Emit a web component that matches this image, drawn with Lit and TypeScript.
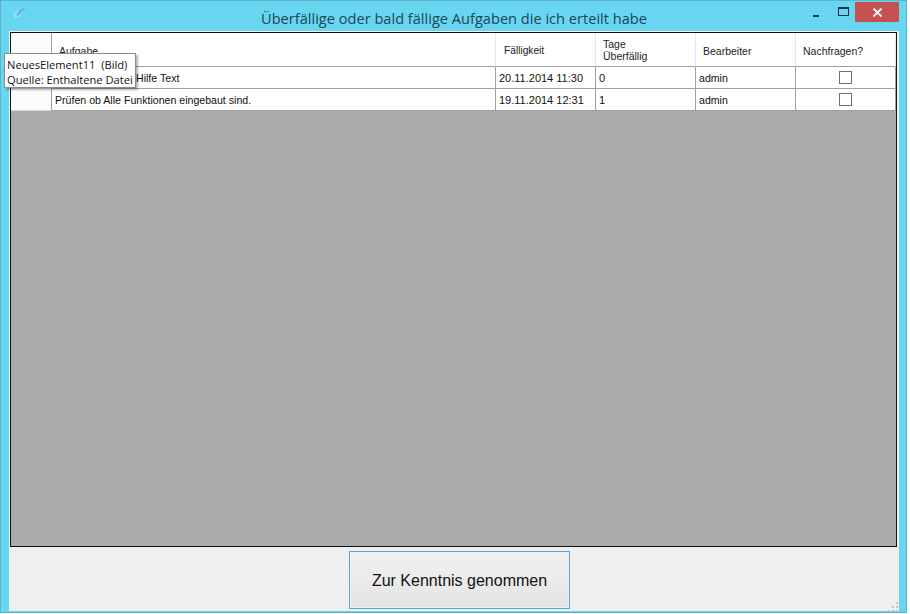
import { LitElement, html, css } from "lit";
import { customElement } from "lit/decorators.js";

const rows = [
  { task: "Hilfe Text", covered: true, due: "20.11.2014 11:30", days: "0", who: "admin" },
  { task: "Prüfen ob Alle Funktionen eingebaut sind.", covered: false, due: "19.11.2014 12:31", days: "1", who: "admin" },
];

@customElement("app-root")
export class AppRoot extends LitElement {
  static styles = css`
    :host { display: block; width: 910px; height: 614px; background: #fff; position: relative; overflow: hidden; font-family: "Liberation Sans", Arial, sans-serif; }
    .win { width: 907px; height: 613px; box-sizing: border-box; background: #69d6f1; border: 1px solid #5bb4cf; display: flex; flex-direction: column; padding: 0 7px 1px 8px; }
    .title { height: 30px; flex: none; display: flex; align-items: flex-start; position: relative; }
    .app-icon { margin: 6px 0 0 2px; }
    .title-text { position: absolute; left: 0; right: 0; top: 7px; text-align: center; font: 14.6px "Open Sans", sans-serif; color: #1c4754; }
    .controls { margin-left: auto; display: flex; align-items: flex-start; margin-top: 1px; }
    .ctl { width: 26px; height: 20px; display: flex; align-items: center; justify-content: center; }
    .min i { display: block; width: 6px; height: 2px; background: #12333f; margin-top: 7px; margin-right: 1px; }
    .max i { display: block; width: 9px; height: 6px; border: 1px solid #12333f; border-top-width: 2px; margin-top: -1px; margin-left: 2px; }
    .close { width: 44px; height: 20px; background: #c75050; display: flex; align-items: center; justify-content: center; }
    .body { flex: 1; background: #f0f0f0; display: flex; flex-direction: column; min-height: 0; padding: 1px 2px 0 1px; }
    .grid { height: 515px; flex: none; box-sizing: border-box; border: 1px solid #101010; background: #ababab; }
    .row { display: grid; grid-template-columns: 41px 444px repeat(4, 100px); background: #fff; }
    .hdr { height: 34px; }
    .data { height: 22px; }
    .cell { box-sizing: border-box; font-size: 10.6px; color: #111; border-right: 1px solid #a0a0a0; border-bottom: 1px solid #a0a0a0; padding: 5px 0 0 3px; white-space: nowrap; overflow: hidden; }
    .date { font-size: 11px; }
    .covered { padding-left: 84px; }
    .rh { background: #fbfbfc; border-right: 1px solid #a0a0a0; border-bottom: 1px solid #d8d8d8; }
    .h { border-right: 1px solid #e3e8f0; border-bottom: 1px solid #a0a0a0; background: #fff; color: #222; padding: 12px 0 0 7px; line-height: 12px; font-size: 10.5px; }
    .h.due { padding-left: 8px; font-size: 10.2px; }
    .h.two { padding-top: 5px; }
    .chk-cell { display: flex; align-items: center; justify-content: center; padding: 0; }
    .chk { width: 13px; height: 13px; box-sizing: border-box; border: 1px solid #707070; background: #fff; }
    .foot { flex: 1; display: flex; justify-content: center; padding: 4px 0 0 12px; box-sizing: border-box; }
    .btn { width: 221px; height: 58px; box-sizing: border-box; border: 1px solid #5aa5d8; background: linear-gradient(#f1f1f1, #e4e4e4); box-shadow: inset 0 0 0 1px #e8f3fa; font: 16px "Liberation Sans", Arial, sans-serif; color: #111; padding: 1px 0 0; }
    .grip { position: absolute; left: 888px; top: 601px; }
    .tip { position: absolute; left: 4px; top: 53px; width: 132px; height: 35px; box-sizing: border-box; background: #fff; border: 1px solid #8a8a8a; box-shadow: 2px 2px 2px rgba(0,0,0,.3); font: 11.15px/15px "Open Sans", sans-serif; color: #111; padding: 3px 0 0 2px; white-space: nowrap; }
  `;

  render() {
    return html`
      <div class="win">
        <div class="title">
          <svg class="app-icon" width="18" height="16" viewBox="0 0 18 16">
            <circle cx="6" cy="7.5" r="3.5" fill="#9fdcf2" opacity=".85"/>
            <path d="M6 8.5L10 3.5M10.5 3l3-1" stroke="#4fa6d8" stroke-width="1.5" fill="none"/>
          </svg>
          <div class="title-text">Überfällige oder bald fällige Aufgaben die ich erteilt habe</div>
          <div class="controls">
            <div class="ctl min"><i></i></div>
            <div class="ctl max"><i></i></div>
            <div class="close">
              <svg width="11" height="9" viewBox="0 0 11 9"><path d="M1.5 .5l8 8M9.5 .5l-8 8" stroke="#fff" stroke-width="1.8"/></svg>
            </div>
          </div>
        </div>
        <div class="body">
          <div class="grid">
            <div class="row hdr">
              <div class="cell rh"></div>
              <div class="cell h">Aufgabe</div>
              <div class="cell h due">Fälligkeit</div>
              <div class="cell h two">Tage<br />Überfällig</div>
              <div class="cell h">Bearbeiter</div>
              <div class="cell h">Nachfragen?</div>
            </div>
            ${rows.map(
              (r) => html`
                <div class="row data">
                  <div class="cell rh"></div>
                  <div class="cell ${r.covered ? "covered" : ""}">${r.task}</div>
                  <div class="cell date">${r.due}</div>
                  <div class="cell date">${r.days}</div>
                  <div class="cell">${r.who}</div>
                  <div class="cell chk-cell"><div class="chk"></div></div>
                </div>
              `
            )}
          </div>
          <div class="foot"><button class="btn">Zur Kenntnis genommen</button></div>
        </div>
      </div>
      <svg class="grip" width="12" height="12" viewBox="0 0 12 12" fill="#c4c4c4">
        <rect x="8" y="1" width="2" height="2"/><rect x="4" y="5" width="2" height="2"/><rect x="8" y="5" width="2" height="2"/>
        <rect x="0" y="9" width="2" height="2"/><rect x="4" y="9" width="2" height="2"/><rect x="8" y="9" width="2" height="2"/>
      </svg>
      <div class="tip">NeuesElement11&nbsp; (Bild)<br />Quelle: Enthaltene Datei</div>
    `;
  }
}
